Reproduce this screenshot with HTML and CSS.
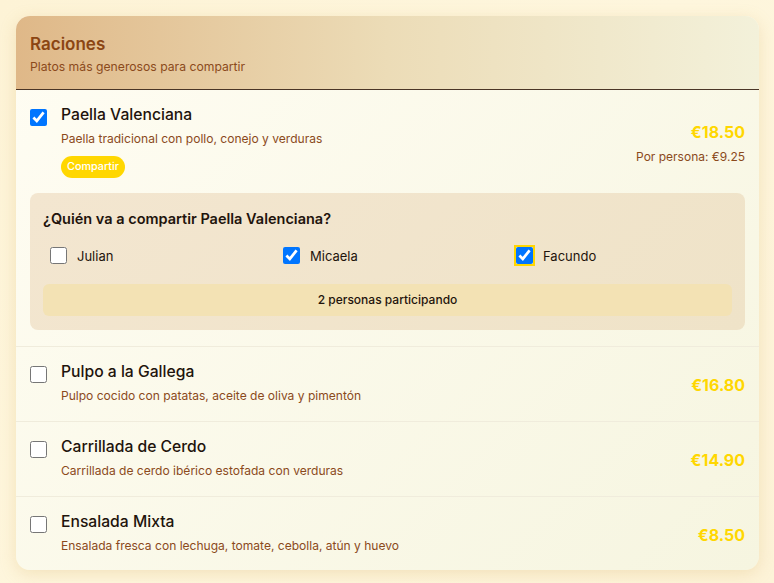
FILE: index.html
```html
<!DOCTYPE html>
<html lang="es">
<head>
<meta charset="utf-8">
<title>Raciones</title>
<link rel="stylesheet" href="styles.css">
</head>
<body>
<section class="card">
  <header class="card-header">
    <h2 class="card-title">Raciones</h2>
    <p class="card-subtitle">Platos más generosos para compartir</p>
  </header>
  <div class="items">
    <div class="item">
      <div class="item-row">
        <input type="checkbox" class="check" checked>
        <div class="item-info">
          <div class="item-name">Paella Valenciana</div>
          <div class="item-desc">Paella tradicional con pollo, conejo y verduras</div>
          <span class="badge">Compartir</span>
        </div>
        <div class="item-price">
          <div class="price">€18.50</div>
          <div class="per-person">Por persona: €9.25</div>
        </div>
      </div>
      <div class="share-panel">
        <div class="share-title">¿Quién va a compartir Paella Valenciana?</div>
        <div class="share-grid">
          <label class="person"><input type="checkbox" class="check">Julian</label>
          <label class="person"><input type="checkbox" class="check" checked>Micaela</label>
          <label class="person"><input type="checkbox" class="check focused" checked>Facundo</label>
        </div>
        <div class="share-summary">2 personas participando</div>
      </div>
    </div>
    <div class="item">
      <div class="item-row">
        <input type="checkbox" class="check">
        <div class="item-info">
          <div class="item-name">Pulpo a la Gallega</div>
          <div class="item-desc">Pulpo cocido con patatas, aceite de oliva y pimentón</div>
        </div>
        <div class="item-price"><div class="price">€16.80</div></div>
      </div>
    </div>
    <div class="item">
      <div class="item-row">
        <input type="checkbox" class="check">
        <div class="item-info">
          <div class="item-name">Carrillada de Cerdo</div>
          <div class="item-desc">Carrillada de cerdo ibérico estofada con verduras</div>
        </div>
        <div class="item-price"><div class="price">€14.90</div></div>
      </div>
    </div>
    <div class="item">
      <div class="item-row">
        <input type="checkbox" class="check">
        <div class="item-info">
          <div class="item-name">Ensalada Mixta</div>
          <div class="item-desc">Ensalada fresca con lechuga, tomate, cebolla, atún y huevo</div>
        </div>
        <div class="item-price"><div class="price">€8.50</div></div>
      </div>
    </div>
  </div>
</section>
</body>
</html>
```

FILE: styles.css
```css
* { box-sizing: border-box; }
html, body { height: 100%; }
body {
  margin: 0;
  padding: 16px 15px 16px 16px;
  font-family: Inter, "Noto Sans", sans-serif;
  background: linear-gradient(135deg, #fdf3d6 0%, #fef6dd 50%, #fdf3d8 100%);
}
.card {
  border-radius: 14px;
  overflow: hidden;
  background: linear-gradient(135deg, #fffdf3 0%, #f6f5e0 100%);
  box-shadow: 0 4px 16px rgba(210, 170, 90, 0.25);
}
.card-header {
  padding: 17px 14px 14px;
  background: linear-gradient(90deg, #dfb888 0%, #ecdcb7 50%, #f3f1da 100%);
  border-bottom: 1px solid #4a3526;
}
.card-title {
  margin: 0;
  font-size: 17px;
  font-weight: 600;
  color: #8b4513;
  line-height: 22px;
}
.card-subtitle {
  margin: 4px 0 0;
  font-size: 12.2px;
  color: #8b4a1c;
  line-height: 16px;
}
.item {
  padding: 15px 14px 16px;
  border-bottom: 1px solid #f0ecdc;
}
.item:last-child { border-bottom: none; padding-bottom: 15px; }
.item-row {
  display: flex;
  align-items: center;
  gap: 14px;
}
.item-row > .check { align-self: flex-start; margin-top: 4px; }
.check {
  width: 17px;
  height: 17px;
  margin: 0;
  flex: none;
}
.item-info { flex: 1; }
.item-name {
  font-size: 15.7px;
  font-weight: 500;
  color: #1f140c;
  line-height: 20px;
}
.item-desc {
  margin-top: 5px;
  font-size: 12.05px;
  color: #8b4a1c;
  line-height: 18px;
}
.badge {
  display: inline-block;
  margin-top: 8px;
  padding: 0 6px;
  height: 22px;
  line-height: 22px;
  border-radius: 11px;
  background: #ffd700;
  color: #fff;
  font-size: 10.8px;
  font-weight: 500;
}
.item-price { text-align: right; padding-top: 2px; }
.price {
  font-size: 16px;
  font-weight: 700;
  color: #ffd700;
  line-height: 22px;
}
.per-person {
  margin-top: 5px;
  font-size: 12px;
  color: #8b4a1c;
  line-height: 17px;
}
.share-panel {
  margin-top: 15px;
  padding: 17px 13px 14px;
  border-radius: 8px;
  background: linear-gradient(135deg, #f3e6d0 0%, #efe3c8 100%);
}
.share-title {
  font-size: 14.5px;
  font-weight: 600;
  color: #1f140c;
  line-height: 17px;
}
.share-grid {
  margin-top: 12px;
  display: grid;
  grid-template-columns: repeat(3, 1fr);
  gap: 10px;
}
.person {
  display: flex;
  align-items: center;
  gap: 10px;
  padding: 8px 7px;
  font-size: 13px;
  color: #1f140c;
}
.focused { outline: 2px solid #ffd700; outline-offset: 0; }
.share-summary {
  margin-top: 12px;
  height: 32px;
  line-height: 32px;
  text-align: center;
  border-radius: 6px;
  background: #f3e2b4;
  font-size: 12px;
  font-weight: 500;
  color: #1f140c;
}
```
